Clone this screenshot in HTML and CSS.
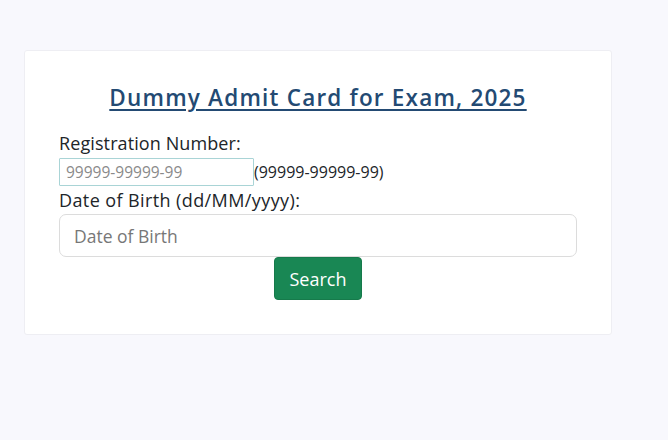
FILE: index.html
```html
<!DOCTYPE html>
<html>
<head>
<meta charset="utf-8">
<link rel="stylesheet" href="styles.css">
</head>
<body>
<div class="page">
  <div class="card">
    <h1 class="title">Dummy Admit Card for Exam, 2025</h1>
    <form class="form">
      <label class="label">Registration Number:</label>
      <div class="reg-row">
        <input class="reg-input" type="text" placeholder="99999-99999-99">
        <span class="hint">(99999-99999-99)</span>
      </div>
      <label class="label label-dob">Date of Birth (dd/MM/yyyy):</label>
      <input class="dob-input" type="text" placeholder="Date of Birth">
      <div class="actions">
        <button class="btn" type="button">Search</button>
      </div>
    </form>
  </div>
</div>
</body>
</html>
```

FILE: styles.css
```css
* { box-sizing: border-box; }
html, body { margin: 0; padding: 0; }
body {
  background: #f8f8fd;
  font-family: "Open Sans", "Liberation Sans", sans-serif;
  color: #212529;
  width: 668px;
  height: 440px;
}
.page {
  padding: 50px 0 0 24px;
}
.card {
  width: 588px;
  height: 285px;
  background: #ffffff;
  border: 1px solid #eeeef3;
  border-radius: 3px;
  padding: 32px 34px 0 34px;
}
.title {
  margin: 0 0 17px 0;
  text-align: center;
  font-family: "Open Sans", "Liberation Sans", sans-serif;
  font-weight: 600;
  font-size: 22.5px;
  letter-spacing: 1.2px;
  line-height: 30px;
  color: #234a73;
  text-decoration: underline;
  text-decoration-thickness: 1.5px;
  text-underline-offset: 3px;
}
.form {
  display: flex;
  flex-direction: column;
}
.label {
  font-size: 18px;
  line-height: 26px;
  display: block;
  letter-spacing: 0.1px;
}
.reg-row {
  display: flex;
  align-items: center;
  margin-top: 2px;
}
.reg-input {
  width: 195px;
  height: 28px;
  border: 1px solid #a9d4d6;
  border-radius: 1px;
  padding: 0 6px;
  font-family: "Open Sans", sans-serif;
  font-size: 15.5px;
  color: #212529;
  outline: none;
}
.reg-input::placeholder { color: #8a8a8a; }
.hint {
  font-size: 16px;
  color: #212529;
}
.label-dob {
  margin-top: 1px;
  letter-spacing: 0.4px;
}
.dob-input {
  width: 518px;
  height: 43px;
  margin-top: 1px;
  border: 1px solid #dcdcdc;
  border-radius: 7px;
  padding: 0 14px;
  font-family: "Open Sans", sans-serif;
  font-size: 17.5px;
  outline: none;
}
.dob-input::placeholder { color: #777; }
.actions {
  display: flex;
  justify-content: center;
}
.btn {
  width: 88px;
  height: 43px;
  background: #198754;
  border: 1px solid #167a4b;
  border-radius: 4px;
  color: #fff;
  font-family: "Open Sans", sans-serif;
  font-size: 18px;
  padding: 0;
}
```
